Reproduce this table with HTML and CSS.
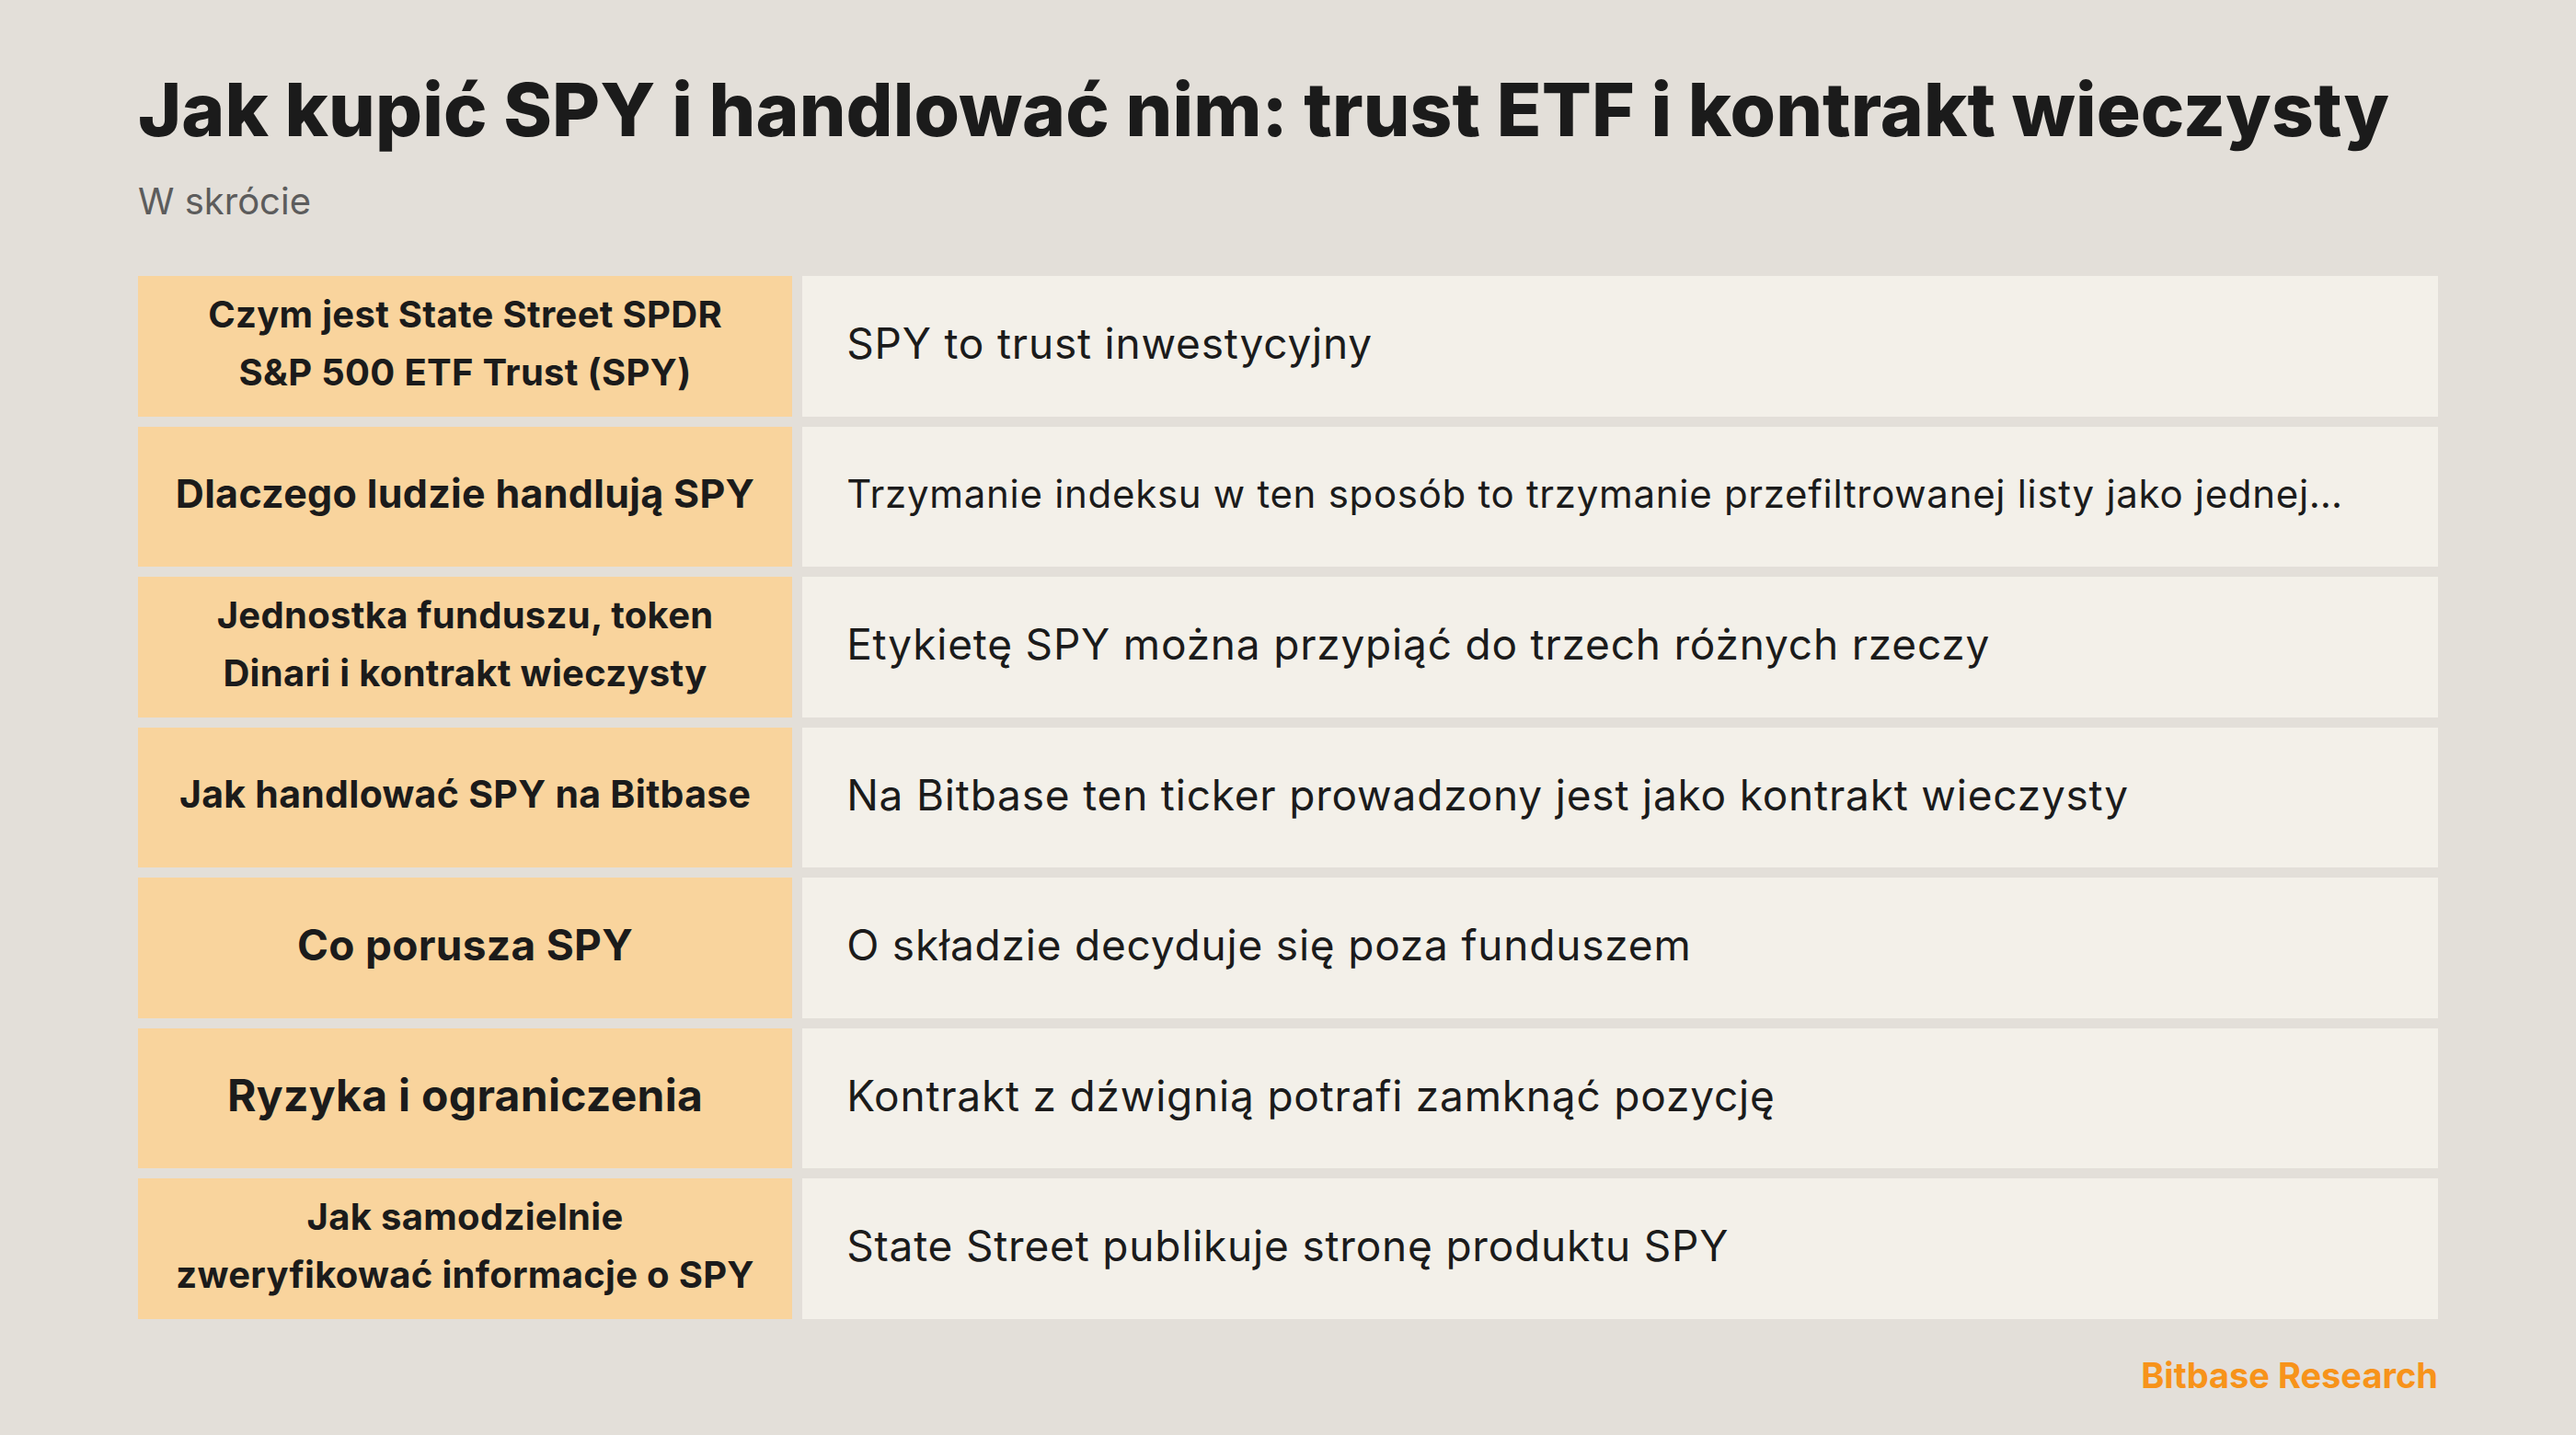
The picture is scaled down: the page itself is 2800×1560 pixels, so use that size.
FILE: index.html
```html
<!DOCTYPE html>
<html lang="pl">
<head>
<meta charset="utf-8">
<title>Jak kupić SPY</title>
<link rel="stylesheet" href="styles.css">
</head>
<body>
<main class="page">
  <header class="header">
    <h1 class="title">Jak kupić SPY i handlować nim: trust ETF i kontrakt wieczysty</h1>
    <p class="subtitle">W skrócie</p>
  </header>
  <section class="table">
    <div class="label label-sm">Czym jest State Street SPDR<br>S&amp;P 500 ETF Trust (SPY)</div>
    <div class="value">SPY to trust inwestycyjny</div>

    <div class="label label-md">Dlaczego ludzie handlują SPY</div>
    <div class="value value-sm">Trzymanie indeksu w ten sposób to trzymanie przefiltrowanej listy jako jednej…</div>

    <div class="label label-sm">Jednostka funduszu, token<br>Dinari i kontrakt wieczysty</div>
    <div class="value">Etykietę SPY można przypiąć do trzech różnych rzeczy</div>

    <div class="label label-msm">Jak handlować SPY na Bitbase</div>
    <div class="value">Na Bitbase ten ticker prowadzony jest jako kontrakt wieczysty</div>

    <div class="label label-lg">Co porusza SPY</div>
    <div class="value">O składzie decyduje się poza funduszem</div>

    <div class="label label-xl">Ryzyka i ograniczenia</div>
    <div class="value">Kontrakt z dźwignią potrafi zamknąć pozycję</div>

    <div class="label label-sm">Jak samodzielnie<br>zweryfikować informacje o SPY</div>
    <div class="value">State Street publikuje stronę produktu SPY</div>
  </section>
  <footer class="footer">Bitbase Research</footer>
</main>
</body>
</html>
```
FILE: styles.css
```css
html, body {
  margin: 0;
  padding: 0;
}
body {
  background: #e3dfd9;
  font-family: Inter, "Noto Sans", sans-serif;
  color: #1b1b1b;
}
.page {
  width: 2800px;
  height: 1560px;
  box-sizing: border-box;
  padding: 71px 150px 0;
  display: flex;
  flex-direction: column;
}
.header {
  display: flex;
  flex-direction: column;
}
.title {
  margin: 0;
  font-size: 80px;
  line-height: 96px;
  font-weight: 800;
  letter-spacing: 0.1px;
  white-space: nowrap;
}
.subtitle {
  margin: 28px 0 0;
  font-size: 40px;
  line-height: 48px;
  font-weight: 400;
  color: #5c5c5c;
}
.table {
  margin-top: 57px;
  display: grid;
  grid-template-columns: 2fr 5fr;
  grid-auto-rows: 152.5px;
  gap: 11px;
}
.label {
  background: #f9d49d;
  display: flex;
  align-items: center;
  justify-content: center;
  text-align: center;
  font-weight: 700;
  padding: 0 30px 6px;
  line-height: 63px;
  letter-spacing: 0.3px;
}
.label-sm { font-size: 40px; }
.label-msm { font-size: 41px; }
.label-md { font-size: 43px; }
.label-lg { font-size: 46px; }
.label-xl { font-size: 48px; }
.value {
  background: #f3f0e9;
  display: flex;
  align-items: center;
  padding: 0 48px 6px;
  font-size: 46px;
  font-weight: 400;
  letter-spacing: 0.8px;
  white-space: nowrap;
  overflow: hidden;
}
.value-sm { font-size: 42px; letter-spacing: 0.7px; }
.footer {
  margin-top: 38px;
  text-align: right;
  color: #f7931a;
  font-weight: 700;
  font-size: 38px;
  line-height: 46px;
}
```
